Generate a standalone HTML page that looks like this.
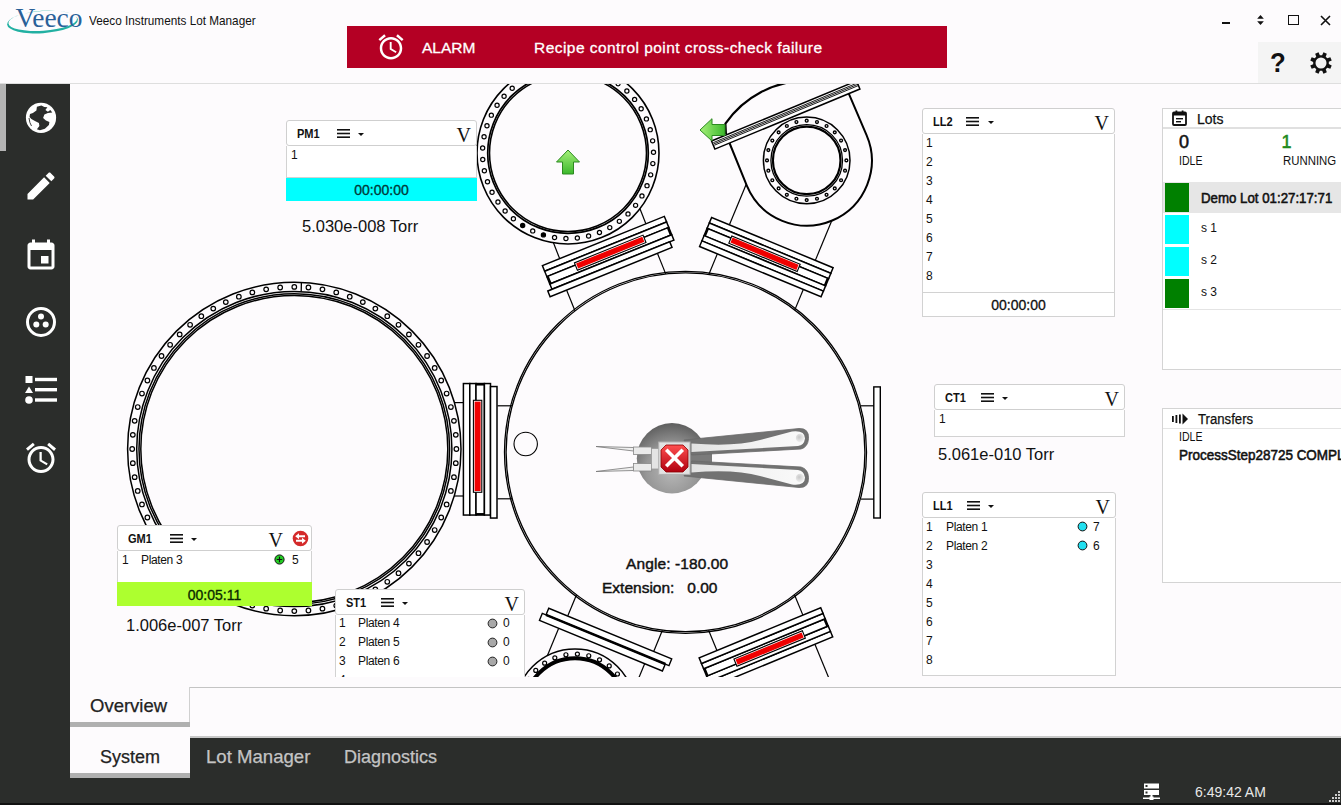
<!DOCTYPE html>
<html><head><meta charset="utf-8">
<style>
*{box-sizing:border-box}
html,body{margin:0;padding:0}
body{width:1341px;height:805px;overflow:hidden;position:relative;background:#fdfbfd;font-family:"Liberation Sans",sans-serif;color:#111}
.abs{position:absolute}
.t{position:absolute;white-space:nowrap;line-height:1}
.box{position:absolute;background:#fff}
.hdr{position:absolute;left:0;top:0;right:0;height:26px;border:1px solid #cfcfcf;border-radius:3px;background:#fff;z-index:1}
.nm{position:absolute;left:9.5px;top:6.5px;font-weight:bold;font-size:12px;line-height:1;transform:scaleX(0.92);transform-origin:0 0}
.hb{position:absolute;left:49px;top:8px;width:13px;height:9px}
.car{position:absolute;left:71px;top:12px;width:0;height:0;border-left:3px solid transparent;border-right:3px solid transparent;border-top:3px solid #111}
.vv{position:absolute;right:5px;top:3.5px;font-family:"Liberation Serif",serif;font-size:20px;line-height:1;color:#111}
.bd{position:absolute;left:0;right:0;border:1px solid #d2d2d2;border-top:none;background:#fff}
.row{position:absolute;font-size:12px;line-height:1;color:#111}
.pl{letter-spacing:-0.35px}
</style></head><body>

<!-- ===== header ===== -->
<svg class="abs" style="left:0;top:0" width="90" height="40" viewBox="0 0 90 40">
  <path fill-rule="evenodd" fill="#22b0a2" d="M7,22 A35.5,11.2 0 1 0 78,22 A35.5,11.2 0 1 0 7,22 Z M8.4,20.9 A34.4,9.9 0 1 1 77.2,20.9 A34.4,9.9 0 1 1 8.4,20.9 Z" transform="rotate(-4 42.5 22)"/>
  <text x="15.5" y="26.8" font-family="Liberation Serif,serif" font-size="27.5" fill="#2a6098" textLength="67" lengthAdjust="spacingAndGlyphs">Veeco</text>
</svg>
<div class="t" style="left:89px;top:14px;font-size:13.4px;color:#111;transform:scaleX(0.878);transform-origin:0 0">Veeco Instruments Lot Manager</div>

<div class="abs" style="left:347px;top:26px;width:600px;height:42px;background:#b40024"></div>
<svg class="abs" style="left:375.5px;top:31.5px" width="30" height="30" viewBox="0 0 24 24"><path fill="#fff" d="M22 5.72l-4.6-3.86-1.29 1.53 4.6 3.86L22 5.72zM7.88 3.39L6.6 1.86 2 5.71l1.29 1.53 4.59-3.85zM12.5 8H11v6l4.75 2.85.75-1.23-4-2.37V8zM12 4c-4.97 0-9 4.03-9 9s4.02 9 9 9c4.97 0 9-4.03 9-9s-4.03-9-9-9zm0 16c-3.87 0-7-3.13-7-7s3.13-7 7-7 7 3.13 7 7-3.13 7-7 7z"/></svg>
<div class="t" style="left:422px;top:40px;font-size:15.5px;color:#fff;-webkit-text-stroke:0.3px #fff">ALARM</div>
<div class="t" style="left:534px;top:40px;font-size:15.5px;letter-spacing:0.45px;color:#fff;-webkit-text-stroke:0.3px #fff">Recipe control point cross-check failure</div>

<!-- window controls -->
<div class="abs" style="left:1222px;top:22px;width:8px;height:2px;background:#111"></div>
<svg class="abs" style="left:1255.5px;top:15px" width="9" height="10" viewBox="0 0 10 12"><path d="M5,0 L9,4.5 L1,4.5 Z M5,12 L9,7.5 L1,7.5 Z" fill="#111"/></svg>
<div class="abs" style="left:1288px;top:15px;width:11px;height:10px;border:1.6px solid #111"></div>
<svg class="abs" style="left:1320px;top:15px" width="11" height="11" viewBox="0 0 11 11"><path d="M1,1 L10,10 M10,1 L1,10" stroke="#111" stroke-width="1.6"/></svg>

<div class="abs" style="left:1258px;top:42px;width:83px;height:41px;background:#f4f4f4"></div>
<div class="t" style="left:1270px;top:49px;font-size:28px;font-weight:bold;color:#111;transform:scaleX(0.92);transform-origin:0 0">?</div>
<svg class="abs" style="left:1308px;top:50px" width="26" height="26" viewBox="0 0 26 26"><path fill="#111" fill-rule="evenodd" d="M23.72,15.47 L22.33,18.83 L19.35,17.70 L17.75,19.31 L18.83,22.33 L15.47,23.72 L14.17,20.81 L11.90,20.82 L10.53,23.72 L7.17,22.33 L8.30,19.35 L6.69,17.75 L3.67,18.83 L2.28,15.47 L5.19,14.17 L5.18,11.90 L2.28,10.53 L3.67,7.17 L6.65,8.30 L8.25,6.69 L7.17,3.67 L10.53,2.28 L11.83,5.19 L14.10,5.18 L15.47,2.28 L18.83,3.67 L17.70,6.65 L19.31,8.25 L22.33,7.17 L23.72,10.53 L20.81,11.83 L20.82,14.10 Z M18.5,13 A5.5,5.5 0 1 0 7.5,13 A5.5,5.5 0 1 0 18.5,13 Z"/></svg>
<div class="abs" style="left:0;top:83px;width:1341px;height:1px;background:#dedede"></div>

<!-- ===== sidebar ===== -->
<div class="abs" style="left:0;top:84px;width:70px;height:721px;background:#2b2d2b"></div>
<div class="abs" style="left:0;top:84px;width:6px;height:67px;background:#b4b4b4"></div>
<svg class="abs" style="left:0;top:84px" width="70" height="68" viewBox="0 84 70 68">
<circle cx="41" cy="117.8" r="15.1" fill="#fff"/>
<path fill="#2b2d2b" d="M36.9,106.7 L41.4,105.5 L44.4,107 L47.4,107.2 L45.4,110 L47.9,111.7 L50.3,110 L52.3,112.4 L47.9,112.9 L44.4,114.4 L43.1,117.9 L45.9,120.4 L49.4,121.9 L48.9,124.9 L44.9,128.8 L39.9,130.3 L36.9,129.3 L39.4,125.9 L38.9,122.9 L34.9,120.9 L31.4,118.9 L29.5,116.9 L30,113.9 L32.9,112.9 L36.4,110.4 Z"/>
<path fill="none" stroke="#2b2d2b" stroke-width="0.9" d="M29,118 Q29.5,123 31.5,126"/>
</svg>
<svg class="abs" style="left:23px;top:168px" width="36" height="36" viewBox="0 0 24 24"><path fill="#fff" d="M3 17.25V21h3.75L17.81 9.94l-3.75-3.75L3 17.25zM20.71 7.04c.39-.39.39-1.02 0-1.41l-2.34-2.34c-.39-.39-1.02-.39-1.41 0l-1.83 1.83 3.75 3.75 1.83-1.83z"/></svg>
<svg class="abs" style="left:23px;top:237.5px" width="36" height="36" viewBox="0 0 24 24"><path fill="#fff" d="M17 12h-5v5h5v-5zM16 1v2H8V1H6v2H5c-1.11 0-1.99.9-1.99 2L3 19c0 1.1.89 2 2 2h14c1.1 0 2-.9 2-2V5c0-1.1-.9-2-2-2h-1V1h-2zm3 18H5V8h14v11z"/></svg>
<svg class="abs" style="left:23px;top:304px" width="36" height="36" viewBox="0 0 36 36"><circle cx="18" cy="18" r="13.5" fill="none" stroke="#fff" stroke-width="3"/><circle cx="18" cy="12.5" r="3" fill="#fff"/><circle cx="13.3" cy="20.5" r="3" fill="#fff"/><circle cx="22.7" cy="20.5" r="3" fill="#fff"/></svg>
<svg class="abs" style="left:23px;top:372px" width="36" height="36" viewBox="0 0 36 36"><rect x="2.5" y="4" width="7" height="7" fill="#fff"/><path d="M6,14.5 L10,21 L2,21 Z" fill="#fff"/><circle cx="6" cy="28" r="3.8" fill="#fff"/><rect x="12" y="5.8" width="22" height="3.4" fill="#fff"/><rect x="12" y="16" width="22" height="3.4" fill="#fff"/><rect x="12" y="26.3" width="22" height="3.4" fill="#fff"/></svg>
<svg class="abs" style="left:23px;top:440px" width="36" height="36" viewBox="0 0 24 24"><path fill="#fff" d="M22 5.72l-4.6-3.86-1.29 1.53 4.6 3.86L22 5.72zM7.88 3.39L6.6 1.86 2 5.71l1.29 1.53 4.59-3.85zM12.5 8H11v6l4.75 2.85.75-1.23-4-2.37V8zM12 4c-4.97 0-9 4.03-9 9s4.02 9 9 9c4.97 0 9-4.03 9-9s-4.03-9-9-9zm0 16c-3.870 0-7-3.13-7-7s3.13-7 7-7 7 3.13 7 7-3.13 7-7 7z"/></svg>

<!-- ===== drawing ===== -->
<svg class="abs" style="left:0;top:0" width="1341" height="805" viewBox="0 0 1341 805">
<defs><clipPath id="cl"><rect x="70" y="84" width="1271" height="593"/></clipPath></defs>
<g clip-path="url(#cl)">
<circle cx="685.5" cy="452.3" r="181" stroke="#000" stroke-width="1.3" fill="none"/>
<circle cx="685.5" cy="452.3" r="179.4" stroke="#000" stroke-width="1.3" fill="none"/>
<circle cx="294.3" cy="449" r="166.7" stroke="#000" fill="none" stroke-width="1.5"/>
<circle cx="294.3" cy="449" r="157.6" stroke="#000" fill="none" stroke-width="1.5"/>
<circle cx="294.3" cy="449" r="155.3" stroke="#000" fill="none" stroke-width="1.5"/>
<circle cx="294.3" cy="449" r="153.5" stroke="#000" fill="none" stroke-width="1.5"/>
<circle cx="294.3" cy="286.9" r="2.3" stroke="#000" fill="none" stroke-width="1.2"/>
<circle cx="308.43" cy="287.52" r="2.3" stroke="#000" fill="none" stroke-width="1.2"/>
<circle cx="322.45" cy="289.36" r="2.3" stroke="#000" fill="none" stroke-width="1.2"/>
<circle cx="336.25" cy="292.42" r="2.3" stroke="#000" fill="none" stroke-width="1.2"/>
<circle cx="349.74" cy="296.68" r="2.3" stroke="#000" fill="none" stroke-width="1.2"/>
<circle cx="362.81" cy="302.09" r="2.3" stroke="#000" fill="none" stroke-width="1.2"/>
<circle cx="375.35" cy="308.62" r="2.3" stroke="#000" fill="none" stroke-width="1.2"/>
<circle cx="387.28" cy="316.22" r="2.3" stroke="#000" fill="none" stroke-width="1.2"/>
<circle cx="398.5" cy="324.82" r="2.3" stroke="#000" fill="none" stroke-width="1.2"/>
<circle cx="408.92" cy="334.38" r="2.3" stroke="#000" fill="none" stroke-width="1.2"/>
<circle cx="418.48" cy="344.8" r="2.3" stroke="#000" fill="none" stroke-width="1.2"/>
<circle cx="427.08" cy="356.02" r="2.3" stroke="#000" fill="none" stroke-width="1.2"/>
<circle cx="434.68" cy="367.95" r="2.3" stroke="#000" fill="none" stroke-width="1.2"/>
<circle cx="441.21" cy="380.49" r="2.3" stroke="#000" fill="none" stroke-width="1.2"/>
<circle cx="446.62" cy="393.56" r="2.3" stroke="#000" fill="none" stroke-width="1.2"/>
<circle cx="450.88" cy="407.05" r="2.3" stroke="#000" fill="none" stroke-width="1.2"/>
<circle cx="453.94" cy="420.85" r="2.3" stroke="#000" fill="none" stroke-width="1.2"/>
<circle cx="455.78" cy="434.87" r="2.3" stroke="#000" fill="none" stroke-width="1.2"/>
<circle cx="456.4" cy="449" r="2.3" stroke="#000" fill="none" stroke-width="1.2"/>
<circle cx="455.78" cy="463.13" r="2.3" stroke="#000" fill="none" stroke-width="1.2"/>
<circle cx="453.94" cy="477.15" r="2.3" stroke="#000" fill="none" stroke-width="1.2"/>
<circle cx="450.88" cy="490.95" r="2.3" stroke="#000" fill="none" stroke-width="1.2"/>
<circle cx="446.62" cy="504.44" r="2.3" stroke="#000" fill="none" stroke-width="1.2"/>
<circle cx="441.21" cy="517.51" r="2.3" stroke="#000" fill="none" stroke-width="1.2"/>
<circle cx="434.68" cy="530.05" r="2.3" stroke="#000" fill="none" stroke-width="1.2"/>
<circle cx="427.08" cy="541.98" r="2.3" stroke="#000" fill="none" stroke-width="1.2"/>
<circle cx="418.48" cy="553.2" r="2.3" stroke="#000" fill="none" stroke-width="1.2"/>
<circle cx="408.92" cy="563.62" r="2.3" stroke="#000" fill="none" stroke-width="1.2"/>
<circle cx="398.5" cy="573.18" r="2.3" stroke="#000" fill="none" stroke-width="1.2"/>
<circle cx="387.28" cy="581.78" r="2.3" stroke="#000" fill="none" stroke-width="1.2"/>
<circle cx="375.35" cy="589.38" r="2.3" stroke="#000" fill="none" stroke-width="1.2"/>
<circle cx="362.81" cy="595.91" r="2.3" stroke="#000" fill="none" stroke-width="1.2"/>
<circle cx="349.74" cy="601.32" r="2.3" stroke="#000" fill="none" stroke-width="1.2"/>
<circle cx="336.25" cy="605.58" r="2.3" stroke="#000" fill="none" stroke-width="1.2"/>
<circle cx="322.45" cy="608.64" r="2.3" stroke="#000" fill="none" stroke-width="1.2"/>
<circle cx="308.43" cy="610.48" r="2.3" stroke="#000" fill="none" stroke-width="1.2"/>
<circle cx="294.3" cy="611.1" r="2.3" stroke="#000" fill="none" stroke-width="1.2"/>
<circle cx="280.17" cy="610.48" r="2.3" stroke="#000" fill="none" stroke-width="1.2"/>
<circle cx="266.15" cy="608.64" r="2.3" stroke="#000" fill="none" stroke-width="1.2"/>
<circle cx="252.35" cy="605.58" r="2.3" stroke="#000" fill="none" stroke-width="1.2"/>
<circle cx="238.86" cy="601.32" r="2.3" stroke="#000" fill="none" stroke-width="1.2"/>
<circle cx="225.79" cy="595.91" r="2.3" stroke="#000" fill="none" stroke-width="1.2"/>
<circle cx="213.25" cy="589.38" r="2.3" stroke="#000" fill="none" stroke-width="1.2"/>
<circle cx="201.32" cy="581.78" r="2.3" stroke="#000" fill="none" stroke-width="1.2"/>
<circle cx="190.1" cy="573.18" r="2.3" stroke="#000" fill="none" stroke-width="1.2"/>
<circle cx="179.68" cy="563.62" r="2.3" stroke="#000" fill="none" stroke-width="1.2"/>
<circle cx="170.12" cy="553.2" r="2.3" stroke="#000" fill="none" stroke-width="1.2"/>
<circle cx="161.52" cy="541.98" r="2.3" stroke="#000" fill="none" stroke-width="1.2"/>
<circle cx="153.92" cy="530.05" r="2.3" stroke="#000" fill="none" stroke-width="1.2"/>
<circle cx="147.39" cy="517.51" r="2.3" stroke="#000" fill="none" stroke-width="1.2"/>
<circle cx="141.98" cy="504.44" r="2.3" stroke="#000" fill="none" stroke-width="1.2"/>
<circle cx="137.72" cy="490.95" r="2.3" stroke="#000" fill="none" stroke-width="1.2"/>
<circle cx="134.66" cy="477.15" r="2.3" stroke="#000" fill="none" stroke-width="1.2"/>
<circle cx="132.82" cy="463.13" r="2.3" stroke="#000" fill="none" stroke-width="1.2"/>
<circle cx="132.2" cy="449" r="2.3" stroke="#000" fill="none" stroke-width="1.2"/>
<circle cx="132.82" cy="434.87" r="2.3" stroke="#000" fill="none" stroke-width="1.2"/>
<circle cx="134.66" cy="420.85" r="2.3" stroke="#000" fill="none" stroke-width="1.2"/>
<circle cx="137.72" cy="407.05" r="2.3" stroke="#000" fill="none" stroke-width="1.2"/>
<circle cx="141.98" cy="393.56" r="2.3" stroke="#000" fill="none" stroke-width="1.2"/>
<circle cx="147.39" cy="380.49" r="2.3" stroke="#000" fill="none" stroke-width="1.2"/>
<circle cx="153.92" cy="367.95" r="2.3" stroke="#000" fill="none" stroke-width="1.2"/>
<circle cx="161.52" cy="356.02" r="2.3" stroke="#000" fill="none" stroke-width="1.2"/>
<circle cx="170.12" cy="344.8" r="2.3" stroke="#000" fill="none" stroke-width="1.2"/>
<circle cx="179.68" cy="334.38" r="2.3" stroke="#000" fill="none" stroke-width="1.2"/>
<circle cx="190.1" cy="324.82" r="2.3" stroke="#000" fill="none" stroke-width="1.2"/>
<circle cx="201.32" cy="316.22" r="2.3" stroke="#000" fill="none" stroke-width="1.2"/>
<circle cx="213.25" cy="308.62" r="2.3" stroke="#000" fill="none" stroke-width="1.2"/>
<circle cx="225.79" cy="302.09" r="2.3" stroke="#000" fill="none" stroke-width="1.2"/>
<circle cx="238.86" cy="296.68" r="2.3" stroke="#000" fill="none" stroke-width="1.2"/>
<circle cx="252.35" cy="292.42" r="2.3" stroke="#000" fill="none" stroke-width="1.2"/>
<circle cx="266.15" cy="289.36" r="2.3" stroke="#000" fill="none" stroke-width="1.2"/>
<circle cx="280.17" cy="287.52" r="2.3" stroke="#000" fill="none" stroke-width="1.2"/>
<line x1="301.4" y1="282.3" x2="301.2" y2="291.5" stroke="#000" fill="none" stroke-width="1.3"/>
<circle cx="568" cy="153" r="91" stroke="#000" fill="none" stroke-width="1.6"/>
<circle cx="568" cy="153" r="80.3" stroke="#000" fill="none" stroke-width="1.7"/>
<circle cx="568" cy="153" r="78.5" stroke="#000" fill="none" stroke-width="1.6"/>
<circle cx="575.78" cy="67.85" r="2.1" stroke="#000" fill="none" stroke-width="1.2"/>
<circle cx="587.06" cy="69.65" r="2.1" stroke="#000" fill="none" stroke-width="1.2"/>
<circle cx="598" cy="72.94" r="2.1" stroke="#000" fill="none" stroke-width="1.2"/>
<circle cx="608.4" cy="77.65" r="2.1" stroke="#000" fill="none" stroke-width="1.2"/>
<circle cx="618.08" cy="83.7" r="2.1" stroke="#000" fill="none" stroke-width="1.2"/>
<circle cx="626.87" cy="91" r="2.1" stroke="#000" fill="none" stroke-width="1.2"/>
<circle cx="634.61" cy="99.4" r="2.1" stroke="#000" fill="none" stroke-width="1.2"/>
<circle cx="641.16" cy="108.76" r="2.1" stroke="#000" fill="none" stroke-width="1.2"/>
<circle cx="646.41" cy="118.9" r="2.1" stroke="#000" fill="none" stroke-width="1.2"/>
<circle cx="650.25" cy="129.66" r="2.1" stroke="#000" fill="none" stroke-width="1.2"/>
<circle cx="652.63" cy="140.83" r="2.1" stroke="#000" fill="none" stroke-width="1.2"/>
<circle cx="653.5" cy="152.22" r="2.1" stroke="#000" fill="none" stroke-width="1.2"/>
<circle cx="652.84" cy="163.62" r="2.1" stroke="#000" fill="none" stroke-width="1.2"/>
<circle cx="650.67" cy="174.83" r="2.1" stroke="#000" fill="none" stroke-width="1.2"/>
<circle cx="647.02" cy="185.66" r="2.1" stroke="#000" fill="none" stroke-width="1.2"/>
<circle cx="641.96" cy="195.9" r="2.1" stroke="#000" fill="none" stroke-width="1.2"/>
<circle cx="635.58" cy="205.37" r="2.1" stroke="#000" fill="none" stroke-width="1.2"/>
<circle cx="628" cy="213.91" r="2.1" stroke="#000" fill="none" stroke-width="1.2"/>
<circle cx="619.35" cy="221.37" r="2.1" stroke="#000" fill="none" stroke-width="1.2"/>
<circle cx="609.77" cy="227.6" r="2.1" stroke="#000" fill="none" stroke-width="1.2"/>
<circle cx="599.46" cy="232.5" r="2.1" stroke="#000" fill="none" stroke-width="1.2"/>
<circle cx="588.58" cy="235.99" r="2.1" stroke="#000" fill="none" stroke-width="1.2"/>
<circle cx="577.34" cy="237.99" r="2.1" stroke="#000" fill="none" stroke-width="1.2"/>
<circle cx="565.93" cy="238.47" r="2.1" stroke="#000" fill="none" stroke-width="1.2"/>
<circle cx="554.55" cy="237.44" r="2.1" stroke="#000" fill="none" stroke-width="1.2"/>
<circle cx="543.42" cy="234.89" r="2.1" stroke="#000" fill="#000" stroke-width="1.2"/>
<circle cx="532.72" cy="230.88" r="2.1" stroke="#000" fill="none" stroke-width="1.2"/>
<circle cx="522.66" cy="225.49" r="2.1" stroke="#000" fill="#000" stroke-width="1.2"/>
<circle cx="513.4" cy="218.8" r="2.1" stroke="#000" fill="none" stroke-width="1.2"/>
<circle cx="505.12" cy="210.93" r="2.1" stroke="#000" fill="none" stroke-width="1.2"/>
<circle cx="497.96" cy="202.03" r="2.1" stroke="#000" fill="none" stroke-width="1.2"/>
<circle cx="492.05" cy="192.26" r="2.1" stroke="#000" fill="none" stroke-width="1.2"/>
<circle cx="487.49" cy="181.78" r="2.1" stroke="#000" fill="none" stroke-width="1.2"/>
<circle cx="484.37" cy="170.8" r="2.1" stroke="#000" fill="none" stroke-width="1.2"/>
<circle cx="482.75" cy="159.49" r="2.1" stroke="#000" fill="none" stroke-width="1.2"/>
<circle cx="482.64" cy="148.07" r="2.1" stroke="#000" fill="none" stroke-width="1.2"/>
<circle cx="484.06" cy="136.74" r="2.1" stroke="#000" fill="none" stroke-width="1.2"/>
<circle cx="486.98" cy="125.69" r="2.1" stroke="#000" fill="none" stroke-width="1.2"/>
<circle cx="491.34" cy="115.14" r="2.1" stroke="#000" fill="none" stroke-width="1.2"/>
<circle cx="497.07" cy="105.26" r="2.1" stroke="#000" fill="none" stroke-width="1.2"/>
<circle cx="504.07" cy="96.23" r="2.1" stroke="#000" fill="none" stroke-width="1.2"/>
<circle cx="512.2" cy="88.22" r="2.1" stroke="#000" fill="none" stroke-width="1.2"/>
<circle cx="521.34" cy="81.36" r="2.1" stroke="#000" fill="none" stroke-width="1.2"/>
<circle cx="531.3" cy="75.78" r="2.1" stroke="#000" fill="none" stroke-width="1.2"/>
<circle cx="541.92" cy="71.57" r="2.1" stroke="#000" fill="none" stroke-width="1.2"/>
<circle cx="553.01" cy="68.82" r="2.1" stroke="#000" fill="none" stroke-width="1.2"/>
<circle cx="564.36" cy="67.58" r="2.1" stroke="#000" fill="none" stroke-width="1.2"/>
<circle cx="806.7" cy="160.4" r="43.3" stroke="#000" fill="none" stroke-width="1.5"/>
<circle cx="806.7" cy="160.4" r="35.8" stroke="#000" fill="none" stroke-width="1.3"/>
<circle cx="806.7" cy="160.4" r="33.8" stroke="#000" fill="none" stroke-width="2.2"/>
<circle cx="806.7" cy="120.7" r="1.4" stroke="#000" fill="none" stroke-width="1.4"/>
<circle cx="816.98" cy="122.05" r="1.4" stroke="#000" fill="none" stroke-width="1.4"/>
<circle cx="826.55" cy="126.02" r="1.4" stroke="#000" fill="none" stroke-width="1.4"/>
<circle cx="834.77" cy="132.33" r="1.4" stroke="#000" fill="none" stroke-width="1.4"/>
<circle cx="841.08" cy="140.55" r="1.4" stroke="#000" fill="none" stroke-width="1.4"/>
<circle cx="845.05" cy="150.12" r="1.4" stroke="#000" fill="none" stroke-width="1.4"/>
<circle cx="846.4" cy="160.4" r="1.4" stroke="#000" fill="none" stroke-width="1.4"/>
<circle cx="845.05" cy="170.68" r="1.4" stroke="#000" fill="none" stroke-width="1.4"/>
<circle cx="841.08" cy="180.25" r="1.4" stroke="#000" fill="none" stroke-width="1.4"/>
<circle cx="834.77" cy="188.47" r="1.4" stroke="#000" fill="none" stroke-width="1.4"/>
<circle cx="826.55" cy="194.78" r="1.4" stroke="#000" fill="none" stroke-width="1.4"/>
<circle cx="816.98" cy="198.75" r="1.4" stroke="#000" fill="none" stroke-width="1.4"/>
<circle cx="806.7" cy="200.1" r="1.4" stroke="#000" fill="none" stroke-width="1.4"/>
<circle cx="796.42" cy="198.75" r="1.4" stroke="#000" fill="none" stroke-width="1.4"/>
<circle cx="786.85" cy="194.78" r="1.4" stroke="#000" fill="none" stroke-width="1.4"/>
<circle cx="778.63" cy="188.47" r="1.4" stroke="#000" fill="none" stroke-width="1.4"/>
<circle cx="772.32" cy="180.25" r="1.4" stroke="#000" fill="none" stroke-width="1.4"/>
<circle cx="768.35" cy="170.68" r="1.4" stroke="#000" fill="none" stroke-width="1.4"/>
<circle cx="767" cy="160.4" r="1.4" stroke="#000" fill="none" stroke-width="1.4"/>
<circle cx="768.35" cy="150.12" r="1.4" stroke="#000" fill="none" stroke-width="1.4"/>
<circle cx="772.32" cy="140.55" r="1.4" stroke="#000" fill="none" stroke-width="1.4"/>
<circle cx="778.63" cy="132.33" r="1.4" stroke="#000" fill="none" stroke-width="1.4"/>
<circle cx="786.85" cy="126.02" r="1.4" stroke="#000" fill="none" stroke-width="1.4"/>
<circle cx="796.42" cy="122.05" r="1.4" stroke="#000" fill="none" stroke-width="1.4"/>
<path d="M729.3,142.5 L746.8,185.64 A65,65 0 1 0 866.46,134.84 L848.7,93.3" stroke="#000" fill="none" stroke-width="2"/>
<path d="M725.9,134 L725.4,123.7 A100,100 0 0 1 807.6,80.6" stroke="#000" fill="none" stroke-width="2.2"/>
<polygon points="711.5,141 856.55,80.92 859.92,89.05 714.87,149.13" fill="#fff" stroke="#000" stroke-width="1.5"/>
<line x1="713.27" y1="142.65" x2="857.39" y2="82.95" stroke="#000" stroke-width="0.9"/>
<line x1="713.8" y1="143.94" x2="857.93" y2="84.24" stroke="#000" stroke-width="0.9"/>
<line x1="714.34" y1="145.24" x2="858.46" y2="85.54" stroke="#000" stroke-width="0.9"/>
<circle cx="575" cy="709" r="60" stroke="#000" fill="none" stroke-width="1.5"/>
<circle cx="575" cy="709" r="50.8" stroke="#000" fill="none" stroke-width="4"/>
<circle cx="577.4" cy="654.05" r="2" stroke="#000" fill="none" stroke-width="1.2"/>
<circle cx="588.77" cy="655.75" r="2" stroke="#000" fill="none" stroke-width="1.2"/>
<circle cx="599.54" cy="659.78" r="2" stroke="#000" fill="none" stroke-width="1.2"/>
<circle cx="609.24" cy="665.96" r="2" stroke="#000" fill="none" stroke-width="1.2"/>
<circle cx="617.44" cy="674.02" r="2" stroke="#000" fill="none" stroke-width="1.2"/>
<circle cx="623.79" cy="683.6" r="2" stroke="#000" fill="none" stroke-width="1.2"/>
<circle cx="628" cy="694.3" r="2" stroke="#000" fill="none" stroke-width="1.2"/>
<circle cx="629.9" cy="705.64" r="2" stroke="#000" fill="none" stroke-width="1.2"/>
<circle cx="629.4" cy="717.13" r="2" stroke="#000" fill="none" stroke-width="1.2"/>
<circle cx="626.52" cy="728.26" r="2" stroke="#000" fill="none" stroke-width="1.2"/>
<circle cx="621.39" cy="738.55" r="2" stroke="#000" fill="none" stroke-width="1.2"/>
<circle cx="614.23" cy="747.55" r="2" stroke="#000" fill="none" stroke-width="1.2"/>
<circle cx="605.36" cy="754.86" r="2" stroke="#000" fill="none" stroke-width="1.2"/>
<circle cx="595.16" cy="760.17" r="2" stroke="#000" fill="none" stroke-width="1.2"/>
<circle cx="584.08" cy="763.25" r="2" stroke="#000" fill="none" stroke-width="1.2"/>
<circle cx="572.6" cy="763.95" r="2" stroke="#000" fill="none" stroke-width="1.2"/>
<circle cx="561.23" cy="762.25" r="2" stroke="#000" fill="none" stroke-width="1.2"/>
<circle cx="550.46" cy="758.22" r="2" stroke="#000" fill="none" stroke-width="1.2"/>
<circle cx="540.76" cy="752.04" r="2" stroke="#000" fill="none" stroke-width="1.2"/>
<circle cx="532.56" cy="743.98" r="2" stroke="#000" fill="none" stroke-width="1.2"/>
<circle cx="526.21" cy="734.4" r="2" stroke="#000" fill="none" stroke-width="1.2"/>
<circle cx="522" cy="723.7" r="2" stroke="#000" fill="none" stroke-width="1.2"/>
<circle cx="520.1" cy="712.36" r="2" stroke="#000" fill="none" stroke-width="1.2"/>
<circle cx="520.6" cy="700.87" r="2" stroke="#000" fill="none" stroke-width="1.2"/>
<circle cx="523.48" cy="689.74" r="2" stroke="#000" fill="none" stroke-width="1.2"/>
<circle cx="528.61" cy="679.45" r="2" stroke="#000" fill="none" stroke-width="1.2"/>
<circle cx="535.77" cy="670.45" r="2" stroke="#000" fill="none" stroke-width="1.2"/>
<circle cx="544.64" cy="663.14" r="2" stroke="#000" fill="none" stroke-width="1.2"/>
<circle cx="554.84" cy="657.83" r="2" stroke="#000" fill="none" stroke-width="1.2"/>
<circle cx="565.92" cy="654.75" r="2" stroke="#000" fill="none" stroke-width="1.2"/>
<rect x="873.8" y="386.9" width="6.5" height="131.1" fill="#fff" stroke="#000" stroke-width="1.4"/>
<line x1="861" y1="405.8" x2="873.8" y2="405.8" stroke="#000" stroke-width="1.2"/>
<line x1="861" y1="499.1" x2="873.8" y2="499.1" stroke="#000" stroke-width="1.2"/>
<line x1="512.09" y1="405.8" x2="497.5" y2="405.8" stroke="#000" stroke-width="1.2"/>
<line x1="512.09" y1="498.8" x2="497.5" y2="498.8" stroke="#000" stroke-width="1.2"/>
<line x1="454" y1="402.6" x2="463.4" y2="402.6" stroke="#000" stroke-width="1.2"/>
<line x1="454" y1="496" x2="463.4" y2="496" stroke="#000" stroke-width="1.2"/>
<line x1="665.71" y1="273.86" x2="657.42" y2="253.33" stroke="#000" stroke-width="1.2"/>
<line x1="646.08" y1="224.26" x2="639.96" y2="208.67" stroke="#000" stroke-width="1.2"/>
<line x1="574.95" y1="310.83" x2="566.56" y2="290.04" stroke="#000" stroke-width="1.2"/>
<line x1="559.49" y1="258.2" x2="553.45" y2="242.79" stroke="#000" stroke-width="1.2"/>
<line x1="794.82" y1="309.89" x2="803.28" y2="289.48" stroke="#000" stroke-width="1.2"/>
<line x1="815.33" y1="260.37" x2="831.94" y2="220.28" stroke="#000" stroke-width="1.2"/>
<line x1="708.9" y1="274.3" x2="717.35" y2="253.89" stroke="#000" stroke-width="1.2"/>
<line x1="729.41" y1="224.78" x2="746.23" y2="184.18" stroke="#000" stroke-width="1.2"/>
<line x1="708.59" y1="630.34" x2="716.93" y2="650.58" stroke="#000" stroke-width="1.2"/>
<line x1="728.94" y1="679.71" x2="756.83" y2="747.38" stroke="#000" stroke-width="1.2"/>
<line x1="794.57" y1="594.9" x2="802.91" y2="615.14" stroke="#000" stroke-width="1.2"/>
<line x1="814.92" y1="644.27" x2="842.81" y2="711.94" stroke="#000" stroke-width="1.2"/>
<line x1="576.43" y1="594.9" x2="567.82" y2="615.79" stroke="#000" stroke-width="1.2"/>
<line x1="558.68" y1="628.25" x2="547.35" y2="655.75" stroke="#000" stroke-width="1.2"/>
<line x1="662.41" y1="630.34" x2="653.8" y2="651.23" stroke="#000" stroke-width="1.2"/>
<line x1="644.66" y1="663.69" x2="632.72" y2="692.67" stroke="#000" stroke-width="1.2"/>
<g transform="translate(685.5,452.3) rotate(-90)"><rect x="-62.75" y="-222.1" width="131.5" height="6.4" fill="#fff" stroke="#000" stroke-width="1.5"/><rect x="-62.75" y="-215.7" width="131.5" height="6.2" fill="#fff" stroke="#000" stroke-width="1.5"/><rect x="-62.75" y="-209.5" width="131.5" height="8.4" fill="#fff" stroke="#000" stroke-width="1.5"/><rect x="-62.75" y="-209.5" width="2" height="8.4" fill="#000"/><rect x="66.75" y="-209.5" width="2" height="8.4" fill="#000"/><rect x="-62.75" y="-201.1" width="131.5" height="6.1" fill="#fff" stroke="#000" stroke-width="1.5"/><rect x="-65.75" y="-195" width="131.5" height="6.5" fill="#fff" stroke="#000" stroke-width="1.5"/><rect x="-40" y="-212.1" width="92" height="8.4" fill="#fff" stroke="#000" stroke-width="1.1"/><rect x="-38.7" y="-210.9" width="89.4" height="6" fill="#f00000"/></g>
<g transform="translate(685.5,452.3) rotate(-22.0)"><rect x="-62.75" y="-226.7" width="131.5" height="6.04" fill="#fff" stroke="#000" stroke-width="1.5"/><rect x="-62.75" y="-220.66" width="131.5" height="5.85" fill="#fff" stroke="#000" stroke-width="1.5"/><rect x="-62.75" y="-214.81" width="131.5" height="7.93" fill="#fff" stroke="#000" stroke-width="1.5"/><rect x="-62.75" y="-214.81" width="2" height="7.93" fill="#000"/><rect x="66.75" y="-214.81" width="2" height="7.93" fill="#000"/><rect x="-62.75" y="-206.89" width="131.5" height="5.76" fill="#fff" stroke="#000" stroke-width="1.5"/><rect x="-67.25" y="-201.13" width="131.5" height="6.13" fill="#fff" stroke="#000" stroke-width="1.5"/><rect x="-32" y="-217.27" width="74" height="7.93" fill="#fff" stroke="#000" stroke-width="1.1"/><rect x="-30.7" y="-216.07" width="71.4" height="5.53" fill="#f00000"/></g>
<g transform="translate(685.5,452.3) rotate(22.5)"><rect x="-65.75" y="-227" width="131.5" height="6" fill="#fff" stroke="#000" stroke-width="1.5"/><rect x="-65.75" y="-221" width="131.5" height="5.81" fill="#fff" stroke="#000" stroke-width="1.5"/><rect x="-65.75" y="-215.19" width="131.5" height="7.88" fill="#fff" stroke="#000" stroke-width="1.5"/><rect x="-65.75" y="-215.19" width="2" height="7.88" fill="#000"/><rect x="63.75" y="-215.19" width="2" height="7.88" fill="#000"/><rect x="-65.75" y="-207.31" width="131.5" height="5.72" fill="#fff" stroke="#000" stroke-width="1.5"/><rect x="-65.75" y="-201.59" width="131.5" height="6.09" fill="#fff" stroke="#000" stroke-width="1.5"/><rect x="-40" y="-217.62" width="74" height="7.88" fill="#fff" stroke="#000" stroke-width="1.1"/><rect x="-38.7" y="-216.43" width="71.4" height="5.47" fill="#f00000"/></g>
<g transform="translate(685.5,452.3) rotate(157.6)"><rect x="-65.75" y="-226.8" width="131.5" height="6" fill="#fff" stroke="#000" stroke-width="1.5"/><rect x="-65.75" y="-220.8" width="131.5" height="5.81" fill="#fff" stroke="#000" stroke-width="1.5"/><rect x="-65.75" y="-214.99" width="131.5" height="7.88" fill="#fff" stroke="#000" stroke-width="1.5"/><rect x="-65.75" y="-214.99" width="2" height="7.88" fill="#000"/><rect x="63.75" y="-214.99" width="2" height="7.88" fill="#000"/><rect x="-65.75" y="-207.11" width="131.5" height="5.72" fill="#fff" stroke="#000" stroke-width="1.5"/><rect x="-65.75" y="-201.39" width="131.5" height="6.09" fill="#fff" stroke="#000" stroke-width="1.5"/><rect x="-40" y="-217.43" width="74" height="7.88" fill="#fff" stroke="#000" stroke-width="1.1"/><rect x="-38.7" y="-216.23" width="71.4" height="5.47" fill="#f00000"/></g>
<g transform="translate(685.5,452.3) rotate(202.4)"><rect x="-66" y="-203.5" width="133" height="7.2" fill="#fff" stroke="#000" stroke-width="1.4"/><rect x="-62" y="-211" width="133" height="7.5" fill="#fff" stroke="#000" stroke-width="1.4"/><line x1="-62" y1="-203.5" x2="67" y2="-203.5" stroke="#000" stroke-width="2.6"/></g>
<circle cx="525.7" cy="444" r="11.7" fill="none" stroke="#000" stroke-width="1.1"/>

<defs>
<radialGradient id="sph" cx="50%" cy="68%" r="68%"><stop offset="0" stop-color="#b8b8b8"/><stop offset="0.55" stop-color="#969696"/><stop offset="1" stop-color="#5e5e5e"/></radialGradient>
<linearGradient id="armU" x1="0" y1="0" x2="0" y2="1"><stop offset="0" stop-color="#6a6a6a"/><stop offset="0.45" stop-color="#9a9a9a"/><stop offset="0.55" stop-color="#e6e6e6"/><stop offset="1" stop-color="#f4f4f4"/></linearGradient>
<linearGradient id="armL" x1="0" y1="0" x2="0" y2="1"><stop offset="0" stop-color="#f4f4f4"/><stop offset="0.45" stop-color="#e6e6e6"/><stop offset="0.55" stop-color="#9a9a9a"/><stop offset="1" stop-color="#6a6a6a"/></linearGradient>
<linearGradient id="armIn" x1="0" y1="0" x2="1" y2="0"><stop offset="0" stop-color="#e2e2e2"/><stop offset="0.5" stop-color="#f2f2f2"/><stop offset="1" stop-color="#fafafa"/></linearGradient>
<radialGradient id="hole" cx="40%" cy="40%" r="60%"><stop offset="0" stop-color="#c8c8c8"/><stop offset="1" stop-color="#f0f0f0"/></radialGradient>
<linearGradient id="redx" x1="0" y1="0" x2="0" y2="1"><stop offset="0" stop-color="#ff5050"/><stop offset="1" stop-color="#b00010"/></linearGradient>
<linearGradient id="grn" x1="0" y1="0" x2="0" y2="1"><stop offset="0" stop-color="#a6f07a"/><stop offset="1" stop-color="#3cb82c"/></linearGradient>
<linearGradient id="grnh" x1="0" y1="0" x2="1" y2="0"><stop offset="0" stop-color="#a6f07a"/><stop offset="1" stop-color="#3cb82c"/></linearGradient>
</defs>
<circle cx="672" cy="458.3" r="35.2" fill="url(#sph)"/>
<path d="M690,450 L712,453 L712,463 L690,466 Z" fill="#7a7a7a"/>
<path d="M684,440 L799,428.5 Q809,428 808.5,438.5 Q808,447 801,449 L691.5,455 Z" fill="#727272" stroke="#6a6a6a" stroke-width="0.8"/>
<path d="M691.5,443.5 Q735,447 760,440 L792,431.5 Q805,430 805,438.5 Q804,445.5 798,446 L691.5,452 Z" fill="url(#armIn)"/>
<path d="M684,476 L799,487.5 Q809,488 808.5,477.5 Q808,469 801,467 L691.5,461 Z" fill="#727272" stroke="#6a6a6a" stroke-width="0.8"/>
<path d="M691.5,472.5 Q735,469 760,476 L792,484.5 Q805,486 805,477.5 Q804,470.5 798,470 L691.5,464 Z" fill="url(#armIn)"/>
<circle cx="800" cy="438" r="4.2" fill="url(#hole)"/>
<circle cx="800" cy="478" r="4.2" fill="url(#hole)"/>
<path d="M596,446.5 L633.5,447.5 L633.5,451 Z" fill="#eee" stroke="#777" stroke-width="0.8"/>
<path d="M596,471.5 L633.5,470.5 L633.5,467 Z" fill="#eee" stroke="#777" stroke-width="0.8"/>
<rect x="633.5" y="447" width="18" height="7.5" fill="#eaeaea" stroke="#888" stroke-width="0.8"/>
<rect x="633.5" y="463.5" width="18" height="7.5" fill="#eaeaea" stroke="#888" stroke-width="0.8"/>
<rect x="651.5" y="448.5" width="8" height="20.5" fill="#e4e4e4" stroke="#999" stroke-width="0.8"/>
<rect x="658.7" y="442" width="31.3" height="32.4" fill="#e2e2e2" stroke="#b0b0b0" stroke-width="1"/>
<path d="M666,445 L683,445 L688,450 L688,467 L683,472 L666,472 L661,467 L661,450 Z" fill="url(#redx)" stroke="#8a0000" stroke-width="0.8" stroke-linejoin="round"/>
<path d="M667.5,451 L681.5,465 M681.5,451 L667.5,465" stroke="#fff" stroke-width="3.6" stroke-linecap="square"/>
<path d="M568,150 L579.5,162 L573.5,162 L573.5,174 L562.5,174 L562.5,162 L556.5,162 Z" fill="url(#grn)" stroke="#2c8a20" stroke-width="1"/>
<path d="M700,130 L712,118.7 L712,124.5 L725,124.5 L725,135.5 L712,135.5 L712,141 Z" fill="url(#grnh)" stroke="#2c8a20" stroke-width="1"/>

</g>
</svg>

<div class="t" style="left:626px;top:556px;font-size:15.5px;letter-spacing:0.1px;color:#111;-webkit-text-stroke:0.45px #111">Angle: -180.00</div>
<div class="t" style="left:602px;top:580px;font-size:15.5px;color:#111;-webkit-text-stroke:0.45px #111">Extension:&nbsp;&nbsp; 0.00</div>

<!-- ===== PM1 ===== -->
<div class="box" style="left:286px;top:120px;width:191px;height:81px;background:transparent">
  <div class="hdr"><div class="nm">PM1</div>
  <svg class="hb" style="left:50px" viewBox="0 0 13 9"><rect y="0" width="13" height="1.6" fill="#111"/><rect y="3.7" width="13" height="1.6" fill="#111"/><rect y="7.4" width="13" height="1.6" fill="#111"/></svg>
  <div class="car" style="left:71px"></div><div class="vv">V</div></div>
  <div class="bd" style="top:26px;height:32px"></div>
  <div class="row" style="left:5px;top:28.5px">1</div>
  <div class="abs" style="left:0;top:58px;width:191px;height:23px;background:#00ffff"></div>
  <div class="t" style="left:0;width:191px;text-align:center;top:63px;font-size:14px;color:#003a3a;-webkit-text-stroke:0.35px #003a3a">00:00:00</div>
</div>
<div class="t" style="left:302px;top:218px;font-size:16.5px;color:#111">5.030e-008 Torr</div>

<!-- ===== GM1 ===== -->
<div class="box" style="left:117px;top:525px;width:195px;height:81px;background:transparent">
  <div class="hdr"><div class="nm">GM1</div>
  <svg class="hb" style="left:52px" viewBox="0 0 13 9"><rect y="0" width="13" height="1.6" fill="#111"/><rect y="3.7" width="13" height="1.6" fill="#111"/><rect y="7.4" width="13" height="1.6" fill="#111"/></svg>
  <div class="car" style="left:73px"></div><div class="vv" style="right:28px">V</div>
  <svg class="abs" style="left:173.5px;top:3.5px" width="17" height="17" viewBox="0 0 17 17"><circle cx="8.5" cy="8.5" r="7.8" fill="#d42a2a"/><path d="M6.5,6.2 L13,6.2 M4,10.8 L10.5,10.8" stroke="#fff" stroke-width="1.9" fill="none"/><path d="M3.2,6.2 L7,3.2 L7,9.2 Z M13.8,10.8 L10,7.8 L10,13.8 Z" fill="#fff"/></svg>
  </div>
  <div class="bd" style="top:26px;height:32px"></div>
  <div class="row" style="left:5px;top:29px">1</div>
  <div class="row pl" style="left:24px;top:29px">Platen 3</div>
  <svg class="abs" style="left:157px;top:29px" width="11" height="11" viewBox="0 0 11 11"><circle cx="5.5" cy="5.5" r="4.6" fill="#22cc22" stroke="#111" stroke-width="1"/><path d="M5.5,2.8 V8.2 M2.8,5.5 H8.2" stroke="#111" stroke-width="1.1"/></svg>
  <div class="row" style="left:175px;top:29px">5</div>
  <div class="abs" style="left:0;top:57px;width:195px;height:24px;background:#adff2f"></div>
  <div class="t" style="left:0;width:195px;text-align:center;top:63px;font-size:14px;color:#0a2a00;-webkit-text-stroke:0.35px #0a2a00">00:05:11</div>
</div>
<div class="t" style="left:126px;top:617px;font-size:16.5px;color:#111">1.006e-007 Torr</div>

<!-- ===== ST1 ===== -->
<div class="box" style="left:335px;top:589px;width:190px;height:88px;background:transparent;overflow:hidden">
  <div class="hdr"><div class="nm">ST1</div>
  <svg class="hb" style="left:45px" viewBox="0 0 13 9"><rect y="0" width="13" height="1.6" fill="#111"/><rect y="3.7" width="13" height="1.6" fill="#111"/><rect y="7.4" width="13" height="1.6" fill="#111"/></svg>
  <div class="car" style="left:66px"></div><div class="vv">V</div></div>
  <div class="bd" style="top:26px;height:120px"></div>
  <div class="row" style="left:4px;top:28px">1</div><div class="row pl" style="left:23px;top:28px">Platen 4</div>
  <div class="row" style="left:4px;top:47px">2</div><div class="row pl" style="left:23px;top:47px">Platen 5</div>
  <div class="row" style="left:4px;top:66px">3</div><div class="row pl" style="left:23px;top:66px">Platen 6</div>
  <div class="row" style="left:4px;top:85px">4</div>
  <svg class="abs" style="left:152px;top:29px" width="11" height="60" viewBox="0 0 11 60"><circle cx="5.5" cy="5.5" r="4.4" fill="#a8a8a8" stroke="#222" stroke-width="1"/><circle cx="5.5" cy="24.5" r="4.4" fill="#a8a8a8" stroke="#222" stroke-width="1"/><circle cx="5.5" cy="43.5" r="4.4" fill="#a8a8a8" stroke="#222" stroke-width="1"/></svg>
  <div class="row" style="left:168px;top:28px">0</div><div class="row" style="left:168px;top:47px">0</div><div class="row" style="left:168px;top:66px">0</div>
</div>

<!-- ===== LL2 ===== -->
<div class="box" style="left:922px;top:108px;width:193px;height:209px;background:transparent">
  <div class="hdr"><div class="nm">LL2</div>
  <svg class="hb" style="left:43px" viewBox="0 0 13 9"><rect y="0" width="13" height="1.6" fill="#111"/><rect y="3.7" width="13" height="1.6" fill="#111"/><rect y="7.4" width="13" height="1.6" fill="#111"/></svg>
  <div class="car" style="left:64.5px"></div><div class="vv">V</div></div>
  <div class="bd" style="top:26px;height:183px"></div>
  <div class="abs" style="left:1px;top:184px;width:191px;height:1px;background:#d2d2d2"></div>
  <div class="row" style="left:4px;top:29px">1</div><div class="row" style="left:4px;top:48px">2</div><div class="row" style="left:4px;top:67px">3</div><div class="row" style="left:4px;top:86px">4</div>
  <div class="row" style="left:4px;top:105px">5</div><div class="row" style="left:4px;top:124px">6</div><div class="row" style="left:4px;top:143px">7</div><div class="row" style="left:4px;top:162px">8</div>
  <div class="t" style="left:0;width:193px;text-align:center;top:190px;font-size:14px;color:#111;-webkit-text-stroke:0.3px #111">00:00:00</div>
</div>

<!-- ===== CT1 ===== -->
<div class="box" style="left:934px;top:384px;width:191px;height:53px;background:transparent">
  <div class="hdr"><div class="nm">CT1</div>
  <svg class="hb" style="left:45.5px" viewBox="0 0 13 9"><rect y="0" width="13" height="1.6" fill="#111"/><rect y="3.7" width="13" height="1.6" fill="#111"/><rect y="7.4" width="13" height="1.6" fill="#111"/></svg>
  <div class="car" style="left:67px"></div><div class="vv">V</div></div>
  <div class="bd" style="top:26px;height:27px"></div>
  <div class="row" style="left:5px;top:28.5px">1</div>
</div>
<div class="t" style="left:938px;top:446px;font-size:16.5px;color:#111">5.061e-010 Torr</div>

<!-- ===== LL1 ===== -->
<div class="box" style="left:922px;top:492px;width:194px;height:185px;background:transparent">
  <div class="hdr"><div class="nm">LL1</div>
  <svg class="hb" style="left:43.5px" viewBox="0 0 13 9"><rect y="0" width="13" height="1.6" fill="#111"/><rect y="3.7" width="13" height="1.6" fill="#111"/><rect y="7.4" width="13" height="1.6" fill="#111"/></svg>
  <div class="car" style="left:65px"></div><div class="vv">V</div></div>
  <div class="bd" style="top:26px;height:158px"></div>
  <div class="row" style="left:4px;top:29px">1</div><div class="row pl" style="left:24px;top:29px">Platen 1</div>
  <div class="row" style="left:4px;top:48px">2</div><div class="row pl" style="left:24px;top:48px">Platen 2</div>
  <div class="row" style="left:4px;top:67px">3</div><div class="row" style="left:4px;top:86px">4</div>
  <div class="row" style="left:4px;top:105px">5</div><div class="row" style="left:4px;top:124px">6</div><div class="row" style="left:4px;top:143px">7</div><div class="row" style="left:4px;top:162px">8</div>
  <svg class="abs" style="left:155px;top:29px" width="11" height="30" viewBox="0 0 11 30"><circle cx="5.5" cy="5.5" r="4.4" fill="#22e0f0" stroke="#111" stroke-width="1"/><circle cx="5.5" cy="24.5" r="4.4" fill="#22e0f0" stroke="#111" stroke-width="1"/></svg>
  <div class="row" style="left:171px;top:29px">7</div><div class="row" style="left:171px;top:48px">6</div>
</div>

<!-- ===== Lots ===== -->
<div class="abs" style="left:1162px;top:108px;width:190px;height:262px;border:1px solid #d4d4d4;background:#fff"></div>
<div class="abs" style="left:1163px;top:127px;width:178px;height:1.5px;background:#e0e0e0"></div>
<svg class="abs" style="left:1172px;top:110px" width="15" height="16" viewBox="0 0 15 16"><rect x="1" y="2.5" width="13" height="12.5" rx="1" fill="none" stroke="#111" stroke-width="1.8"/><rect x="1" y="2.5" width="13" height="3" fill="#111"/><rect x="3.5" y="0.5" width="1.8" height="3" fill="#111"/><rect x="9.7" y="0.5" width="1.8" height="3" fill="#111"/><rect x="4" y="8" width="7" height="1.4" fill="#111"/><rect x="4" y="11" width="5" height="1.4" fill="#111"/></svg>
<div class="t" style="left:1197px;top:112px;font-size:14px;color:#111;-webkit-text-stroke:0.25px #111">Lots</div>
<div class="t" style="left:1179px;top:133px;font-size:18px;color:#111;-webkit-text-stroke:0.55px #111">0</div>
<div class="t" style="left:1281.5px;top:133px;font-size:18px;color:#1e8a1e;-webkit-text-stroke:0.55px #1e8a1e">1</div>
<div class="t" style="left:1179px;top:155px;font-size:12px;color:#111;transform:scaleX(0.88);transform-origin:0 0">IDLE</div>
<div class="t" style="left:1283px;top:155px;font-size:12px;color:#111;transform:scaleX(0.95);transform-origin:0 0">RUNNING</div>
<div class="abs" style="left:1163px;top:182px;width:178px;height:31px;background:#e6e6e6"></div>
<div class="abs" style="left:1165px;top:183px;width:24px;height:29px;background:#008000"></div>
<div class="t" style="left:1201px;top:190.5px;font-size:14.2px;color:#111;-webkit-text-stroke:0.55px #111;transform:scaleX(0.935);transform-origin:0 0">Demo Lot 01:27:17:71</div>
<div class="abs" style="left:1165px;top:215px;width:24px;height:29px;background:#00ffff"></div>
<div class="t" style="left:1201px;top:222px;font-size:12px;color:#111">s 1</div>
<div class="abs" style="left:1165px;top:247px;width:24px;height:29px;background:#00ffff"></div>
<div class="t" style="left:1201px;top:254px;font-size:12px;color:#111">s 2</div>
<div class="abs" style="left:1165px;top:279px;width:24px;height:29px;background:#008000"></div>
<div class="t" style="left:1201px;top:286px;font-size:12px;color:#111">s 3</div>
<div class="abs" style="left:1163px;top:309px;width:178px;height:1px;background:#e4e4e4"></div>

<!-- ===== Transfers ===== -->
<div class="abs" style="left:1162px;top:408px;width:190px;height:175px;border:1px solid #d4d4d4;background:#fff"></div>
<div class="abs" style="left:1163px;top:428px;width:178px;height:1px;background:#e4e4e4"></div>
<svg class="abs" style="left:1171px;top:413px" width="18" height="12" viewBox="0 0 18 12"><rect x="1" y="3" width="1.8" height="6" fill="#111"/><rect x="4.5" y="2" width="1.8" height="8" fill="#111"/><rect x="8" y="1.5" width="1.8" height="9" fill="#111"/><path d="M11.5,0.5 L17,6 L11.5,11.5 Z" fill="#111"/></svg>
<div class="t" style="left:1198px;top:412px;font-size:14px;color:#111;-webkit-text-stroke:0.25px #111;transform:scaleX(0.94);transform-origin:0 0">Transfers</div>
<div class="t" style="left:1179px;top:431px;font-size:12px;color:#111;transform:scaleX(0.88);transform-origin:0 0">IDLE</div>
<div class="t" style="left:1179px;top:448px;font-size:14.2px;color:#111;-webkit-text-stroke:0.55px #111;transform:scaleX(0.95);transform-origin:0 0">ProcessStep28725 COMPLETE</div>

<!-- ===== tab strip ===== -->
<div class="abs" style="left:70px;top:677px;width:1271px;height:61px;background:#fdfbfd"></div>
<div class="abs" style="left:190px;top:687px;width:1151px;height:1px;background:#c4c4c4"></div>
<div class="abs" style="left:189px;top:687px;width:1px;height:40px;background:#d0d0d0"></div>
<div class="abs" style="left:70px;top:722px;width:120px;height:5px;background:#b0b0b0"></div>
<div class="t" style="left:90px;top:697px;font-size:18.5px;color:#222;-webkit-text-stroke:0.25px #222">Overview</div>

<!-- ===== bottom bar ===== -->
<div class="abs" style="left:70px;top:737px;width:1271px;height:68px;background:#2b2d2b"></div>
<div class="abs" style="left:190px;top:736px;width:1151px;height:2px;background:#c8c8c8"></div>
<div class="abs" style="left:70px;top:727px;width:120px;height:51px;background:#fdfbfd"></div>
<div class="abs" style="left:70px;top:773px;width:120px;height:5px;background:#b0b0b0"></div>
<div class="t" style="left:100px;top:748px;font-size:18px;color:#222;-webkit-text-stroke:0.25px #222">System</div>
<div class="t" style="left:206px;top:748px;font-size:18.6px;color:#c4c4c4;-webkit-text-stroke:0.25px #c4c4c4">Lot Manager</div>
<div class="t" style="left:344px;top:748px;font-size:18px;color:#c4c4c4;-webkit-text-stroke:0.25px #c4c4c4">Diagnostics</div>
<div class="abs" style="left:0;top:803px;width:1341px;height:2px;background:#111"></div>
<svg class="abs" style="left:1143px;top:783px" width="17" height="17" viewBox="0 0 17 17"><rect x="1" y="0.5" width="15" height="5" fill="#fff"/><rect x="1" y="7" width="15" height="5" fill="#fff"/><rect x="2.5" y="2" width="2" height="2" fill="#2b2d2b"/><rect x="2.5" y="8.5" width="2" height="2" fill="#2b2d2b"/><rect x="7.5" y="12" width="2" height="3" fill="#fff"/><rect x="0" y="14.5" width="17" height="1.5" fill="#fff"/><rect x="6.5" y="13.5" width="4" height="3.5" fill="#fff"/></svg>
<div class="t" style="left:1195px;top:785px;font-size:14px;color:#e8e8e8">6:49:42 AM</div>
<svg class="abs" style="left:1328px;top:790px" width="13" height="13" viewBox="0 0 13 13"><g fill="#ccc"><rect x="10" y="1" width="2" height="2"/><rect x="7" y="4" width="2" height="2"/><rect x="10" y="4" width="2" height="2"/><rect x="4" y="7" width="2" height="2"/><rect x="7" y="7" width="2" height="2"/><rect x="10" y="7" width="2" height="2"/><rect x="1" y="10" width="2" height="2"/><rect x="4" y="10" width="2" height="2"/><rect x="7" y="10" width="2" height="2"/><rect x="10" y="10" width="2" height="2"/></g></svg>

</body></html>
